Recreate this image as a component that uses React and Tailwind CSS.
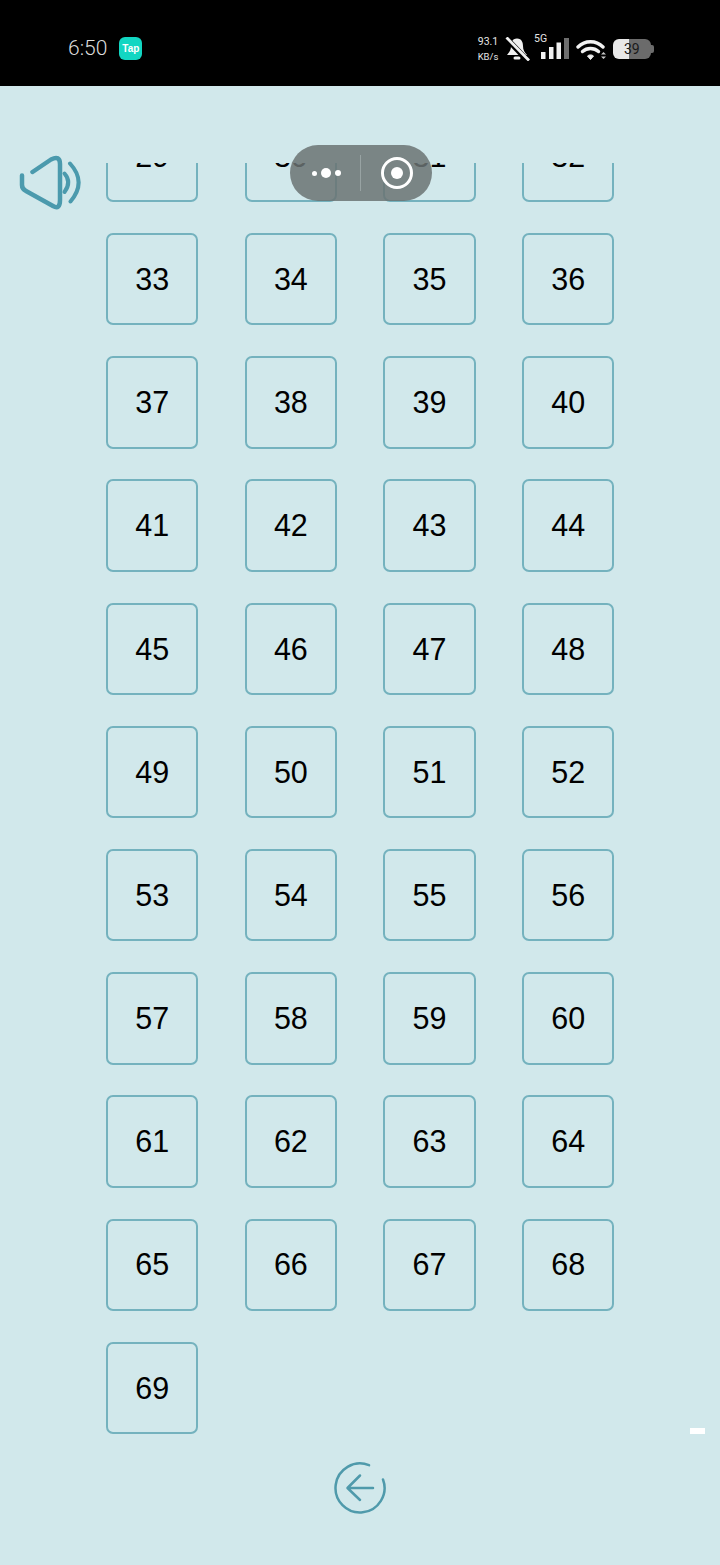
import React from "react";

const nums = [];
for (let i = 29; i <= 69; i++) nums.push(i);

function Speaker() {
  return (
    <svg width="66" height="58" viewBox="18 155 66 58" fill="none" stroke="#4b9aad" strokeWidth="4.5" strokeLinecap="round" strokeLinejoin="round">
      <path d="M32.500 172 L51 159.500 Q60 155 60 164 L60 200 Q60 210 53 206 L26 191 Q22 189 22 185 L22 175.500" />
      <path d="M64.500 173.500 Q72 182 64.500 192" strokeWidth="4" />
      <path d="M70 163.500 Q87 182 70.500 201.500" strokeWidth="4" />
    </svg>
  );
}

function Back() {
  return (
    <svg width="54" height="54" viewBox="333 1461 54 54" fill="none" stroke="#4f9aab" strokeWidth="2.500" strokeLinecap="round" strokeLinejoin="round">
      <path d="M369 1465.200 A24.500 24.500 0 1 0 383 1479.500" />
      <path d="M373 1488 L348 1488 M360 1475.500 L347.500 1488 L360 1500" />
    </svg>
  );
}

export default function App() {
  return (
    <div className="relative h-[1565px] w-[720px] overflow-hidden bg-[#d1e8eb] font-['Liberation_Sans',sans-serif]">
      <header className="flex h-[86px] items-center justify-between bg-black pr-[66px] pl-[68px] pt-[11px] text-white">
        <div className="flex items-center gap-[12px]">
          <span className="font-['Roboto',sans-serif] text-[21px] font-light leading-none text-[#dcdcdc]">6:50</span>
          <span className="flex h-[23px] w-[23px] items-center justify-center rounded-[6px] bg-[#12d6c2] text-[10px] font-bold leading-none text-white">Tap</span>
        </div>
        <div className="flex items-center">
          <div className="mr-[7px] flex w-[20px] flex-col items-center font-['Roboto',sans-serif] text-[10.5px] leading-[15px] text-[#e5e5e5]">
            <span>93.1</span>
            <span className="text-[9.5px]">KB/s</span>
          </div>
          <svg width="25" height="24" viewBox="0 0 25 24" fill="none">
            <path d="M12 1.500 C7 1.500 6 6 6 9 C6 13 4.500 15 2 18 L22 18 C19.500 15 18 13 18 9 C18 6 17 1.500 12 1.500 Z" fill="#f1f1f1" />
            <rect x="8.500" y="19.500" width="7" height="3" rx="1.500" fill="#f1f1f1" />
            <path d="M1 1 L22 23" stroke="#000" strokeWidth="5.500" />
            <path d="M1.500 0.500 L24 23.500" stroke="#f1f1f1" strokeWidth="2.800" />
          </svg>
          <div className="relative ml-[4px] h-[24px] w-[35px]">
            <span className="absolute top-[-3px] left-0 font-['Roboto',sans-serif] text-[10.5px] leading-none text-[#e5e5e5]">5G</span>
            <svg width="35" height="24" viewBox="0 0 35 24" className="absolute top-0 left-0">
              <rect x="7" y="15" width="4.500" height="7" fill="#f1f1f1" />
              <rect x="15" y="10" width="4.500" height="12" fill="#f1f1f1" />
              <rect x="22.500" y="5.500" width="4.500" height="16.500" fill="#f1f1f1" />
              <rect x="30" y="1" width="5" height="21" fill="#6e6e6e" />
            </svg>
          </div>
          <svg width="32" height="24" viewBox="0 0 32 24" fill="none" className="ml-[7px]">
            <path d="M2 10 C9 3 20 3 27 10" stroke="#f1f1f1" strokeWidth="3.400" strokeLinecap="round" />
            <path d="M6.500 14.500 C11 10.500 18 10.500 22.500 14.500" stroke="#f1f1f1" strokeWidth="3.400" strokeLinecap="round" />
            <path d="M11.500 19 L14.500 22.500 L17.500 19 C16 17.500 13 17.500 11.500 19 Z" fill="#f1f1f1" stroke="#f1f1f1" strokeWidth="1" />
            <path d="M25 17.500 L27.500 15 L30 17.500 Z M25 19.500 L30 19.500 L27.500 22 Z" fill="#c8c8c8" />
          </svg>
          <div className="relative ml-[5px] flex h-[20px] w-[41px] items-center">
            <div className="h-full w-[16px] rounded-l-[6px] bg-[#e8e8e8]" />
            <div className="h-full w-[22px] rounded-r-[6px] bg-[#6b6b6b]" />
            <div className="h-[8px] w-[3px] rounded-r-[2px] bg-[#6b6b6b]" />
            <span className="absolute left-[11px] top-[3px] font-['Roboto',sans-serif] text-[14px] leading-none text-[#1a1a1a]">39</span>
          </div>
        </div>
      </header>

      <main className="flex flex-col items-center pt-[77px]">
        <div className="h-[1277px] w-full overflow-hidden">
          <div className="mt-[-53.2px] ml-[106px] grid grid-cols-[repeat(4,92.4px)] gap-x-[46.27px] gap-y-[30.8px]">
            {nums.map((n) => (
              <button
                key={n}
                className="flex h-[92.4px] w-[92.4px] items-center justify-center rounded-[7px] border-2 border-[#74b2be] text-[30.5px] leading-none text-black"
              >
                {n}
              </button>
            ))}
          </div>
        </div>
        <div className="mt-[21px]">
          <Back />
        </div>
      </main>

      <div className="absolute top-[155px] left-[18px]">
        <Speaker />
      </div>

      <div className="absolute top-[145px] left-[290px] flex h-[56px] w-[142px] items-center rounded-full bg-[#6b7373d9]">
        <div className="flex w-[70px] items-center justify-end gap-[4px] pr-[19px]">
          <span className="h-[5px] w-[5px] rounded-full bg-white" />
          <span className="h-[10px] w-[10px] rounded-full bg-white" />
          <span className="h-[6px] w-[6px] rounded-full bg-white" />
        </div>
        <div className="h-[36px] w-px bg-[#98a3a3]" />
        <div className="ml-[20px] flex h-[32px] w-[32px] items-center justify-center rounded-full border-[3px] border-white">
          <span className="h-[12px] w-[12px] rounded-full bg-white" />
        </div>
      </div>

      <div className="absolute top-[1428px] left-[690px] h-[6px] w-[15px] bg-white" />
    </div>
  );
}
